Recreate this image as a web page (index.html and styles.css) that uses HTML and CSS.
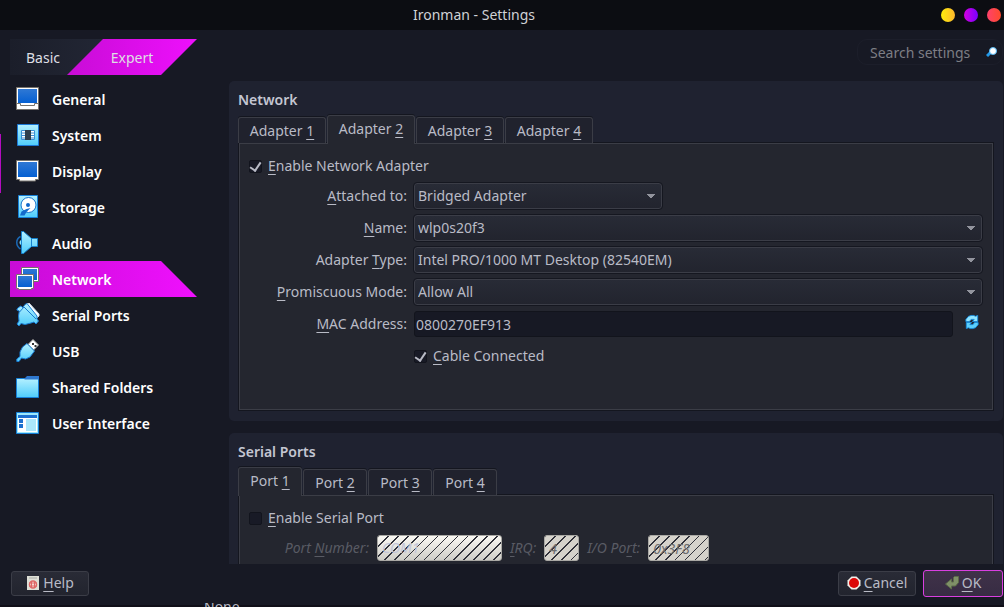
FILE: index.html
```html
<!DOCTYPE html>
<html lang="en">
<head>
<meta charset="utf-8">
<title>Ironman - Settings</title>
<link rel="stylesheet" href="styles.css">
</head>
<body>
<svg class="defs" width="0" height="0" aria-hidden="true">
  <defs>
    <linearGradient id="screen" x1="0" y1="0" x2="0" y2="1"><stop offset="0" stop-color="#2f78d4"/><stop offset="1" stop-color="#0560d2"/></linearGradient>
    <linearGradient id="ice" x1="0" y1="0" x2="0" y2="1"><stop offset="0" stop-color="#b4f0ff"/><stop offset="1" stop-color="#4fcdfb"/></linearGradient>
  </defs>
</svg>
<div class="window">
  <header class="titlebar">
    <h1 class="titlebar-text">Ironman - Settings</h1>
    <div class="controls">
      <button class="dot dot-min" aria-label="Minimize"></button>
      <button class="dot dot-max" aria-label="Maximize"></button>
      <button class="dot dot-close" aria-label="Close"></button>
    </div>
  </header>

  <div class="content">
    <aside class="sidebar">
      <div class="modes">
        <button class="mode">Basic</button>
        <button class="mode mode-active">Expert</button>
      </div>
      <nav class="nav">
        <a class="nav-item" href="#general"><svg class="icon" viewBox="0 0 24 24"><path d="M.5.5h22v22H.5z" fill="#fff" stroke="#77736c"/><path d="M2 2h19v14H2z" fill="url(#screen)"/><path d="M1 16.500h3.500v2h14v-2H22" fill="none" stroke="#77736c"/></svg>General</a>
        <a class="nav-item" href="#system"><svg class="icon" viewBox="0 0 24 24"><path d="M1.500 1.500h21v21h-21z" fill="url(#ice)" stroke="#1c78d6"/><path d="M5.500 7.500h13v9h-13z" fill="#fff" stroke="#3b91d6"/><path d="M5 10h14M5 12.500h14M5 15h14" stroke="#3b91d6"/><path d="M9 7h6v10H9z" fill="#30404e"/></svg>System</a>
        <a class="nav-item" href="#display"><svg class="icon" viewBox="0 0 24 24"><path d="M.5 1.500h22v19h-3v1.500h-16v-1.500h-3z" fill="#fff" stroke="#77736c"/><path d="M2 3h19v15H2z" fill="url(#screen)"/></svg>Display</a>
        <a class="nav-item" href="#storage"><svg class="icon" viewBox="0 0 24 24"><path d="M2.500.5h19v22h-19z" fill="url(#ice)" stroke="#1680d8"/><circle cx="12.500" cy="10" r="7.500" fill="#fff" stroke="#1a75cc"/><circle cx="12" cy="10" r="2" fill="#0f66ca"/><path d="M14.500 13l-4 4-2 3.500H4l1.500-4 5-2.500z" fill="#146bcb"/></svg>Storage</a>
        <a class="nav-item" href="#audio"><svg class="icon" viewBox="0 0 24 24"><path d="M4.500 5.500C-.5 8-.5 15 4.500 18" fill="none" stroke="#1b69b5" stroke-width="1.500"/><path d="M5 9c-2 1-2 4 0 5z" fill="#8be5ff"/><path d="M5.500.5h2l8 7h6v8h-6l-8 7h-2z" fill="url(#ice)" stroke="#1782cf"/><path d="M15.500 7.500v8" stroke="#1782cf"/></svg>Audio</a>
        <a class="nav-item nav-active" href="#network"><svg class="icon" viewBox="0 0 24 24"><path d="M5.500.5h17v14h-17z" fill="#fff" stroke="#77736c"/><path d="M7 2h14v11H7z" fill="url(#screen)"/><path d="M.5 7.500h17v14h-2v1h-13v-1h-2z" fill="#fff" stroke="#77736c"/><path d="M2 9h14v11H2z" fill="url(#screen)"/></svg>Network</a>
        <a class="nav-item" href="#serial"><svg class="icon" viewBox="0 0 24 24"><path d="M11 1l2-1 10 11v2l-2 2z" fill="#fff" stroke="#c9dbe8"/><path d="M.8 7l1-2 3-2 2 1.500L9 1.500l2-1L21 13v3l1.500 2-2.500 3-2-2-3 1-6 1.500-4-1-2 2.500-2-2 2-3-.5-5 .8-5z" fill="url(#ice)" stroke="#197bd2"/><path d="M8 4l12 12M3.500 9L8 4" fill="none" stroke="#197bd2"/></svg>Serial Ports</a>
        <a class="nav-item" href="#usb"><svg class="icon" viewBox="0 0 24 24"><path d="M17 .5l5.500 5.500-5 5-5.500-5.500z" fill="#fff" stroke="#a5a5a0"/><path d="M16 4h2v2h-2zM18.500 6h2v2h-2z" fill="#333"/><path d="M11 4.500l7.500 7.500-4.500 6-4.500 2-4-1L3 22.500H.8V20L4 17.500l0-4.500 2.500-5z" fill="url(#ice)" stroke="#197bd2"/></svg>USB</a>
        <a class="nav-item" href="#folders"><svg class="icon" viewBox="0 0 24 24"><path d="M.5 3.500h22v19H.5z" fill="url(#ice)" stroke="#1680d8"/><path d="M8 4l3-3h12v3.500H9z" fill="#2f78cf"/></svg>Shared Folders</a>
        <a class="nav-item" href="#ui"><svg class="icon" viewBox="0 0 24 24"><path d="M.5 1.500h22v21H.5z" fill="#9ce8fb" stroke="#1680d8"/><path d="M2 4h19v3H2z" fill="#1c70cf"/><path d="M2 7h19v14H2z" fill="#fff"/><path d="M3 8h4v4H3zM3 13h4v4H3z" fill="#1c70cf"/><path d="M10 8h10v12H10z" fill="#abe7fb"/></svg>User Interface</a>
      </nav>
    </aside>

    <main class="main">
      <div class="search-row">
        <label class="search">
          <input class="search-input" type="text" placeholder="Search settings" aria-label="Search settings">
          <svg class="search-icon" viewBox="0 0 12 12"><path d="M1 10l4-4" stroke="#2298e8" stroke-width="3"/><circle cx="7" cy="5" r="3.500" fill="#fff" stroke="#54b9f5"/></svg>
        </label>
      </div>
      <div class="panels">
        <section class="panel">
          <h2 class="panel-title">Network</h2>
          <div class="tabs" role="tablist">
            <button class="tab" role="tab">Adapter <u>1</u></button>
            <button class="tab tab-active" role="tab" aria-selected="true">Adapter <u>2</u></button>
            <button class="tab" role="tab">Adapter <u>3</u></button>
            <button class="tab" role="tab">Adapter <u>4</u></button>
          </div>
          <div class="pane">
            <label class="check"><input class="box" type="checkbox" checked><span><u>E</u>nable Network Adapter</span></label>
            <div class="form">
              <label class="label" for="attached"><u>A</u>ttached to:</label>
              <select class="select select-short" id="attached"><option>Bridged Adapter</option></select>
              <label class="label" for="name"><u>N</u>ame:</label>
              <select class="select" id="name"><option>wlp0s20f3</option></select>
              <label class="label" for="type">Adapter <u>T</u>ype:</label>
              <select class="select" id="type"><option>Intel PRO/1000 MT Desktop (82540EM)</option></select>
              <label class="label" for="mode"><u>P</u>romiscuous Mode:</label>
              <select class="select" id="mode"><option>Allow All</option></select>
              <label class="label" for="mac"><u>M</u>AC Address:</label>
              <div class="mac">
                <input class="field" id="mac" type="text" value="0800270EF913">
                <button class="refresh" aria-label="Generate new address"><svg class="refresh-icon" viewBox="0 0 16 16"><path d="M1 7.500V5l3-3.500 3-1h3l2 1L14.500.5V7.500H8.500L10.500 5H7L5 7.500z" fill="#8fe4ff" stroke="#168de0"/><path d="M15 8.500V11l-3 3.500-3 1H6l-2-1-2.500 1V8.500h6L5.500 11H9l2-2.500z" fill="#5ccffb" stroke="#168de0"/></svg></button>
              </div>
              <label class="check check-cable"><input class="box" type="checkbox" checked><span><u>C</u>able Connected</span></label>
            </div>
          </div>
        </section>

        <section class="panel">
          <h2 class="panel-title">Serial Ports</h2>
          <div class="tabs" role="tablist">
            <button class="tab tab-port tab-active" role="tab" aria-selected="true">Port <u>1</u></button>
            <button class="tab tab-port" role="tab">Port <u>2</u></button>
            <button class="tab tab-port" role="tab">Port <u>3</u></button>
            <button class="tab tab-port" role="tab">Port <u>4</u></button>
          </div>
          <div class="pane">
            <label class="check"><input class="box" type="checkbox"><span><u>E</u>nable Serial Port</span></label>
            <div class="ports">
              <label class="label off label-port" for="port">Port <u>N</u>umber:</label>
              <select class="hatched hatched-port" id="port" disabled><option>COM1</option></select>
              <label class="label off" for="irq"><u>I</u>RQ:</label>
              <input class="hatched hatched-irq" id="irq" type="text" value="4" disabled>
              <label class="label off" for="io">I/O Po<u>r</u>t:</label>
              <input class="hatched hatched-io" id="io" type="text" value="0x3F8" disabled>
            </div>
          </div>
        </section>
      </div>
    </main>
  </div>

  <footer class="footer">
    <button class="btn btn-help"><svg class="btn-icon" viewBox="0 0 14 14"><path d="M1 0h12v14H1z" fill="#dedfd6"/><path d="M3 2h8" stroke="#a9aaa5"/><circle cx="7" cy="8.500" r="3.500" fill="#f6d9d4" stroke="#de6666" stroke-width="1.500"/><path d="M3 7h8M3 10h8M5.500 5v7M8.500 5v7" stroke="#de6666"/></svg><span><u>H</u>elp</span></button>
    <button class="btn"><svg class="btn-icon" viewBox="0 0 14 14"><path d="M4.500.5h5l4 4v5l-4 4h-5l-4-4v-5z" fill="#f2efe9"/><circle cx="7" cy="7" r="5" fill="#dc0808"/></svg><span><u>C</u>ancel</span></button>
    <button class="btn btn-ok"><svg class="btn-icon" viewBox="0 0 14 14"><path d="M8.500 1.500l1-1h4v6l-3 3.500H6.500v3L.5 8l6-5v3h2z" fill="#7f9068" stroke="#5c6c48"/></svg><span><u>O</u>K</span></button>
  </footer>
  <div class="behind">None</div>
  <div class="edge"></div>
</div>
</body>
</html>
```
FILE: styles.css
```css
* { box-sizing: border-box; }

body {
  margin: 0;
  background: #171924;
  color: #b9bbc6;
  font: 14px/20px "Noto Sans", "Open Sans", sans-serif;
}

button, input, select { font: inherit; color: inherit; margin: 0; }
button { padding: 0; border: 0; background: none; }
u { text-decoration: underline; text-decoration-thickness: 1px; text-underline-offset: 3px; }
.defs { position: absolute; }

.window {
  position: relative;
  display: flex;
  flex-direction: column;
  height: 100vh;
  overflow: hidden;
}

.titlebar {
  display: flex;
  align-items: center;
  height: 30px;
  padding: 0 3px 0 7px;
  background: #0c0d12;
}
.titlebar-text { flex: 1; margin: 0; font-size: 14px; font-weight: 400; text-align: center; color: #d0d2d6; }
.controls { display: flex; gap: 9px; }
.dot { width: 14px; height: 14px; border-radius: 50%; }
.dot-min { background: linear-gradient(90deg, #fdec0c, #fdb82c); }
.dot-max { background: linear-gradient(90deg, #d400e0, #7a00ff); }
.dot-close { background: linear-gradient(90deg, #ff416c, #ff4b2b); }

.content {
  flex: 1;
  min-height: 0;
  display: grid;
  grid-template-columns: 187px minmax(0, 1fr);
  grid-template-rows: minmax(0, 1fr);
  column-gap: 32px;
  padding: 9px 1px 0 10px;
}

.modes { display: flex; height: 36px; margin-bottom: 6px; }
.mode { width: 93px; padding: 2px 27px 0 0; background: linear-gradient(90deg, #1b1e2a, #222634); color: #dedfe4; }
.mode-active {
  width: 130px;
  margin-left: -36px;
  padding: 2px 0 0;
  background: linear-gradient(90deg, #c80cd6, #ee10fc);
  clip-path: polygon(36px 0, 100% 0, calc(100% - 36px) 100%, 0 100%);
}

.nav-item {
  display: flex;
  align-items: center;
  gap: 12px;
  height: 36px;
  padding-left: 6px;
  color: #fff;
  font-weight: 600;
  line-height: 20px;
  padding-top: 2px;
  text-decoration: none;
}
.nav-active {
  background: linear-gradient(90deg, #c80cd6, #f010fe);
  clip-path: polygon(0 0, calc(100% - 36px) 0, 100% 100%, 0 100%);
}
.icon { width: 24px; height: 24px; margin-bottom: 2px; }

.main { display: flex; flex-direction: column; min-height: 0; }
.search-row { display: flex; justify-content: flex-end; padding-bottom: 16px; }
.search {
  display: flex;
  align-items: center;
  width: 146px;
  height: 26px;
  padding: 0 4px 0 12px;
  border: 1px solid #1c1e2a;
  border-radius: 10px;
}
.search-input { flex: 1; min-width: 0; padding: 2px 0 0; border: 0; background: none; }
.search-input::placeholder { color: #7d7e85; opacity: 1; }
.search-icon { width: 12px; height: 12px; }

.panels { flex: 1; min-height: 0; display: flex; flex-direction: column; gap: 12px; overflow: hidden; }
.panel {
  flex: none;
  padding: 9px 10px 11px 9px;
  border-radius: 5px;
  background: #1f2230;
}
.panel-title { margin: 0 0 5px; font-size: 14px; line-height: 20px; font-weight: 600; color: #c4c6d2; }

.tabs { display: flex; align-items: flex-end; gap: 1px; height: 28px; }
.tab {
  width: 88px;
  height: 26px;
  border: 1px solid #3b3d46;
  border-bottom: 0;
  border-radius: 3px 3px 0 0;
  background: #20222d;
  box-shadow: 0 -1px 0 #14161f;
}
.tab-port { width: 64px; }
.tab-active { position: relative; z-index: 1; height: 29px; margin-bottom: -1px; padding-bottom: 2px; background: #24262f; }

.pane {
  margin-left: 1px;
  padding: 9px 10px 40px 9px;
  border: 1px solid #3b3d46;
  background: #24262f;
  box-shadow: 0 0 0 1px #14161f;
}

.check { display: flex; align-items: center; gap: 6px; height: 26px; }
.box {
  appearance: none;
  display: grid;
  place-items: center;
  width: 13px;
  height: 13px;
  border: 1px solid #12141d;
  border-radius: 2px;
  background: #181a26;
}
.box:checked::after {
  content: "";
  width: 5px;
  height: 9px;
  border: solid #b9bbc6;
  border-width: 0 2px 2px 0;
  transform: translateY(-1px) rotate(34deg);
}

.form {
  display: grid;
  grid-template-columns: 158px minmax(0, 1fr);
  gap: 6px 7px;
  padding-top: 4px;
}
.label { line-height: 26px; text-align: right; }
.select {
  appearance: none;
  width: 100%;
  height: 26px;
  padding: 0 24px 0 3px;
  border: 1px solid #3b3d47;
  border-radius: 3px;
  outline: 1px solid #151720;
  background:
    linear-gradient(#92949d, #92949d) right 6px top 10px / 8px 1px no-repeat,
    linear-gradient(#92949d, #92949d) right 7px top 11px / 6px 1px no-repeat,
    linear-gradient(#92949d, #92949d) right 8px top 12px / 4px 1px no-repeat,
    linear-gradient(#92949d, #92949d) right 9px top 13px / 2px 1px no-repeat,
    linear-gradient(#282b36, #22242e);
}
.select-short { width: 248px; }
.mac { display: flex; gap: 9px; }
.field {
  flex: 1;
  min-width: 0;
  height: 26px;
  padding: 0 1px;
  border: 1px solid #12141c;
  border-radius: 3px;
  background: #171924;
}
.refresh { width: 20px; height: 22px; }
.refresh-icon { display: block; width: 14px; height: 16px; margin: auto; }
.check-cable { grid-column: 2; }

.ports { display: flex; gap: 8px; padding-top: 4px; }
.label-port { width: 120px; }
.off { color: #595b64; font-style: italic; }
.hatched {
  appearance: none;
  height: 26px;
  padding: 0 4px;
  border: 1px solid #a9a8a4;
  border-radius: 3px;
  background: repeating-linear-gradient(135deg, #31323b 0 1px, transparent 1px 7px), #d5d2cb;
  color: #6b6c6e;
  font-style: italic;
  opacity: 1;
}
.hatched-port {
  width: 125px;
  background: repeating-linear-gradient(135deg, #31323b 0 1px, transparent 1px 7px), linear-gradient(#faf8f3, #cecdc7);
  color: #c3c6d8;
}
.hatched-irq { width: 35px; }
.hatched-io { width: 61px; }

.footer { display: flex; align-items: center; gap: 7px; height: 39px; padding: 0 1px 1px 11px; }
.btn {
  display: flex;
  align-items: center;
  justify-content: center;
  gap: 3px;
  width: 78px;
  height: 25px;
  border: 1px solid #3b3d47;
  border-radius: 3px;
  background: linear-gradient(#292b36, #22242e);
}
.btn-help { margin-right: auto; }
.btn-ok { width: 80px; height: 27px; border-color: #d93fe0; background: linear-gradient(#403249, #372c43); }
.btn-icon { width: 14px; height: 14px; }

.behind {
  height: 4px;
  padding-left: 204px;
  overflow: hidden;
  background: linear-gradient(#171924 2px, #100f18 2px);
  line-height: 8px;
}

.edge { position: absolute; left: 0; top: 134px; width: 1px; height: 59px; background: #b40cc0; }
```
